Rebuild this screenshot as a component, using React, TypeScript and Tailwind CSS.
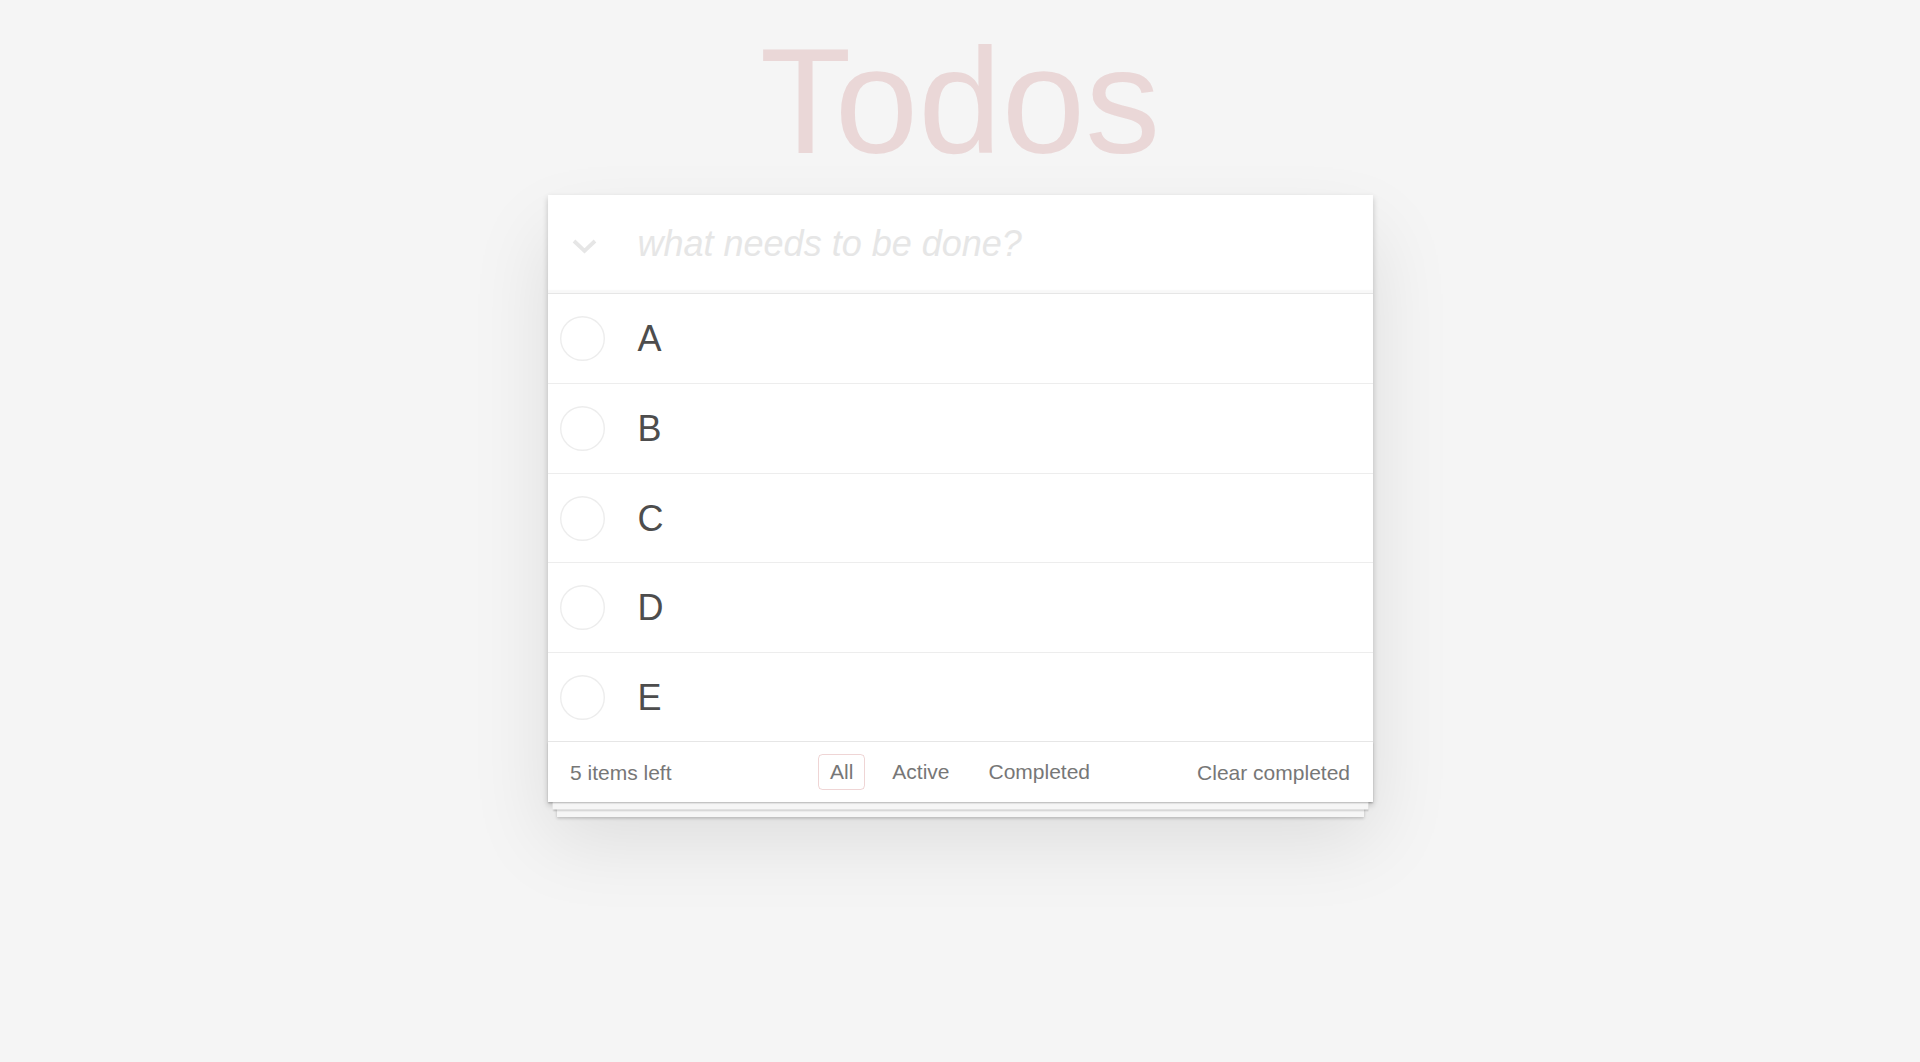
import React from "react";

const todos = [
  { t: "A", cls: "flex h-[90px] items-center border-b border-[#ededed] pl-[12px]" },
  { t: "B", cls: "flex h-[90px] items-center border-b border-[#ededed] pl-[12px]" },
  { t: "C", cls: "flex h-[89px] items-center border-b border-[#ededed] pl-[12px]" },
  { t: "D", cls: "flex h-[90px] items-center border-b border-[#ededed] pl-[12px]" },
  { t: "E", cls: "flex h-[88px] items-center pl-[12px]" },
];

function Circle() {
  return (
    <svg width="45" height="45" viewBox="0 0 45 45" className="shrink-0">
      <circle cx="22.5" cy="22.5" r="21.8" fill="none" stroke="#ededed" strokeWidth="1.4" />
    </svg>
  );
}

export default function App() {
  return (
    <div className="min-h-screen w-full bg-[#f5f5f5] font-['Liberation_Sans',Arial,sans-serif] font-light text-[#4d4d4d]">
      <div className="mx-auto w-[825px]">
        <h1 className="box-border h-[195px] pt-[26px] text-center text-[150px] leading-[150px] font-thin text-[rgba(175,47,47,0.15)]">
          Todos
        </h1>
        <div className="relative bg-white shadow-[0_3px_6px_0_rgba(0,0,0,0.2),0_37.5px_75px_0_rgba(0,0,0,0.1)]">
          <div className="flex h-[98px] items-center shadow-[inset_0_-3px_1.5px_rgba(0,0,0,0.03)]">
            <div className="box-border flex h-full w-[90px] shrink-0 items-center pl-[24px] pt-[5px]">
              <svg width="25" height="15" viewBox="0 0 25 15">
                <polyline points="2,2 12.5,12 23,2" fill="none" stroke="#e6e6e6" strokeWidth="3.8" />
              </svg>
            </div>
            <input
              className="min-w-0 flex-1 bg-transparent pr-[24px] text-[36px] leading-[50px] text-[#4d4d4d] outline-none placeholder:italic placeholder:text-[#e6e6e6]"
              placeholder="what needs to be done?"
            />
          </div>
          <ul className="border-t border-[#e6e6e6]">
            {todos.map((item) => (
              <li key={item.t} className={item.cls}>
                <Circle />
                <span className="ml-[33px] text-[36px] leading-[43px] text-[#4d4d4d]">{item.t}</span>
              </li>
            ))}
          </ul>
          <footer className="box-border grid h-[61px] grid-cols-[1fr_auto_1fr] items-center border-t border-[#e6e6e6] px-[22.5px] text-[21px] leading-[29px] text-[#777] shadow-[0_1.5px_1.5px_rgba(0,0,0,0.2),0_12px_0_-4.5px_#f6f6f6,0_13.5px_1.5px_-4.5px_rgba(0,0,0,0.2),0_24px_0_-9px_#f6f6f6,0_25.5px_3px_-9px_rgba(0,0,0,0.2)]">
            <span className="justify-self-start">5 items left</span>
            <div className="flex items-center gap-[6px]">
              <a className="mx-[4.5px] rounded-[4.5px] border border-[rgba(175,47,47,0.2)] px-[11px] py-[5px] leading-[24px]">All</a>
              <a className="mx-[4.5px] rounded-[4.5px] border border-transparent px-[11px] py-[5px] leading-[24px]">Active</a>
              <a className="mx-[4.5px] rounded-[4.5px] border border-transparent px-[11px] py-[5px] leading-[24px]">Completed</a>
            </div>
            <span className="justify-self-end">Clear completed</span>
          </footer>
        </div>
      </div>
    </div>
  );
}
